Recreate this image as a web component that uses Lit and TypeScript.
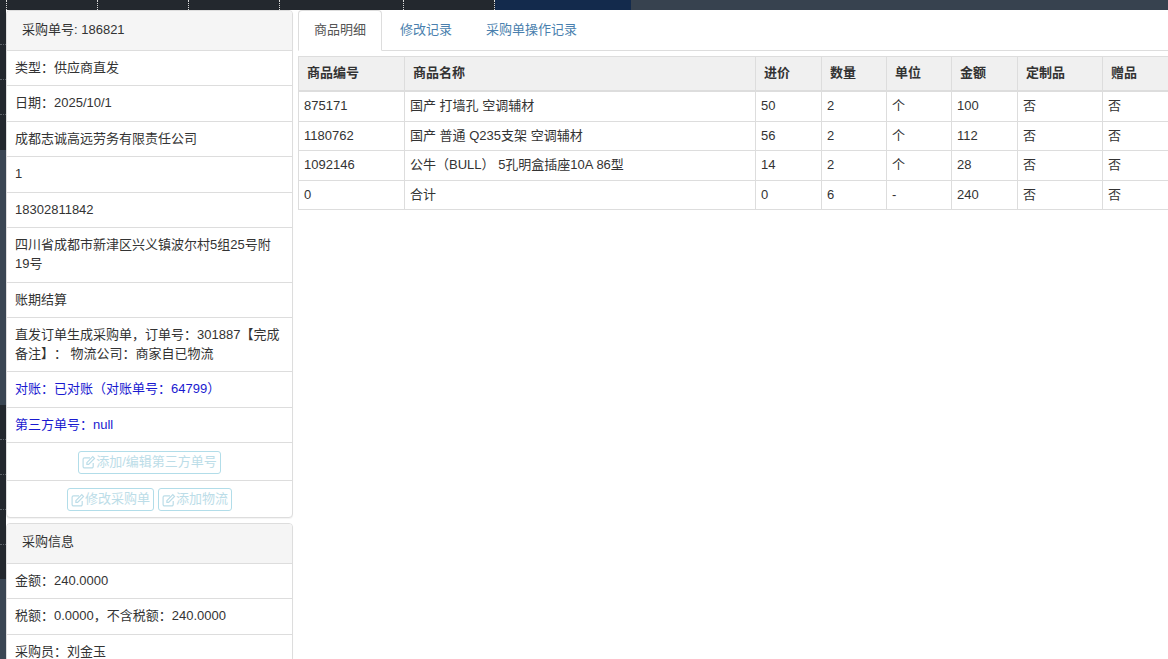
import { LitElement, css, html } from "lit";
import { customElement } from "lit/decorators.js";

// full-width punctuation, kept as escapes
const CN = "\uFF1A";
const CM = "\uFF0C";
const LP = "\uFF08";
const RP = "\uFF09";
const LB = "\u3010";
const RB = "\u3011";

const editIcon = html`<svg class="icon" viewBox="0 0 14 14" width="14" height="14" fill="none" stroke="currentColor" stroke-width="1.2">
  <path d="M11.2 8v3.4a1.5 1.5 0 0 1-1.5 1.5H2.6a1.5 1.5 0 0 1-1.5-1.5V4.3a1.5 1.5 0 0 1 1.5-1.5H8" />
  <path d="M4.9 7.6 10.8 1.7l1.7 1.7-5.9 5.9H4.9z" />
</svg>`;

const orderItems = [
  { text: `类型${CN}供应商直发` },
  { text: `日期${CN}2025/10/1` },
  { text: "成都志诚高远劳务有限责任公司" },
  { text: "1" },
  { text: "18302811842" },
  { text: "四川省成都市新津区兴义镇波尔村5组25号附19号" },
  { text: "账期结算" },
  { text: `直发订单生成采购单${CM}订单号${CN}301887${LB}完成备注${RB}${CN} 物流公司${CN}商家自已物流` },
  { text: `对账${CN}已对账${LP}对账单号${CN}64799${RP}`, blue: true },
  { text: `第三方单号${CN}null`, blue: true },
];
const buyItems = [
  `金额${CN}240.0000`,
  `税额${CN}0.0000${CM}不含税额${CN}240.0000`,
  `采购员${CN}刘金玉`,
];

const columns = [106, 351, 66, 65, 65, 66, 85, 90];
const headers = ["商品编号", "商品名称", "进价", "数量", "单位", "金额", "定制品", "赠品"];
const rows = [
  ["875171", "国产 打墙孔 空调辅材", "50", "2", "个", "100", "否", "否"],
  ["1180762", "国产 普通 Q235支架 空调辅材", "56", "2", "个", "112", "否", "否"],
  ["1092146", `公牛${LP}BULL${RP} 5孔明盒插座10A 86型`, "14", "2", "个", "28", "否", "否"],
  ["0", "合计", "0", "6", "-", "240", "否", "否"],
];

@customElement("app-root")
export class AppRoot extends LitElement {
  static styles = css`
    :host {
      display: block;
      width: 100%;
      height: 100vh;
      overflow: hidden;
      background: #fff;
      color: #333;
      font: 13px/1.42857 "Liberation Sans", "Noto Sans CJK SC", sans-serif;
      text-spacing-trim: space-all;
    }
    * {
      box-sizing: border-box;
    }
    .top {
      display: flex;
      height: 10px;
    }
    .seg {
      flex: none;
      background: #23282e;
      border-right: 1px dotted #d8d8d8;
    }
    .navy {
      flex: none;
      width: 136px;
      background: #132a4c;
    }
    .slate {
      flex: 1;
      background: #37424f;
    }
    .body {
      display: flex;
      height: 649px;
    }
    .rail {
      flex: none;
      width: 6px;
      display: flex;
      flex-direction: column;
    }
    .rail-dark {
      background: #23282e;
    }
    .rail-light {
      background: #3a4653;
    }
    .tick {
      height: 35px;
      border-bottom: 1px dotted #5c6268;
    }
    .side {
      flex: none;
      width: 287px;
      margin-right: 5px;
    }
    .panel {
      background: #fff;
      border: 1px solid #ddd;
      border-radius: 4px;
      margin-bottom: 5px;
      box-shadow: 0 1px 1px rgba(0, 0, 0, 0.05);
      overflow: hidden;
    }
    .heading {
      padding: 10px 15px;
      background: #f5f5f5;
      border-bottom: 1px solid #ddd;
    }
    .heading.second {
      padding: 9.4px 15px 11px;
    }
    .item {
      padding: 8px;
      border-bottom: 1px solid #ddd;
    }
    .item:last-child {
      border-bottom: 0;
    }
    .blue {
      color: #1a1ad0;
    }
    .actions {
      display: flex;
      justify-content: center;
      gap: 4px;
      padding: 7.5px 8px 5.7px;
    }
    .btn {
      display: flex;
      align-items: center;
      height: 23px;
      padding: 0 3px;
      color: #bcdde8;
      background: #fff;
      border: 1px solid #b2dde9;
      border-radius: 3px;
      white-space: nowrap;
    }
    .icon {
      flex: none;
    }
    .main {
      flex: 1;
      min-width: 0;
      overflow: hidden;
    }
    .tabs {
      display: flex;
      height: 41px;
      border-bottom: 1px solid #ddd;
    }
    .tab {
      height: 40px;
      margin-right: 2px;
      padding: 10px 15px;
      border: 1px solid transparent;
      border-radius: 4px 4px 0 0;
      color: #4a7fae;
    }
    .tab.active {
      height: 41px;
      color: #555;
      background: #fff;
      border-color: #ddd #ddd #fff;
    }
    table {
      width: 894px;
      margin-top: 5px;
      table-layout: fixed;
      border-collapse: collapse;
    }
    th,
    td {
      border: 1px solid #ddd;
      text-align: left;
      font-weight: normal;
    }
    th {
      padding: 6.5px 8px 8px;
      font-weight: bold;
      background: #f0f0f0;
      border-bottom-width: 2px;
    }
    td {
      padding: 5px;
      white-space: nowrap;
    }
  `;

  render() {
    return html`
      <div class="top">
        ${[7, 91, 91, 91, 124, 91].map((w) => html`<div class="seg" style="width:${w}px"></div>`)}
        <div class="navy"></div>
        <div class="slate"></div>
      </div>
      <div class="body">
        <div class="rail">
          <div class="rail-dark" style="height:140px">${[0, 1, 2].map(() => html`<div class="tick"></div>`)}</div>
          <div class="rail-light" style="height:255px"></div>
          <div class="rail-dark" style="height:174px">${[0, 1, 2, 3].map(() => html`<div class="tick"></div>`)}</div>
          <div class="rail-light" style="flex:1"></div>
        </div>
        <div class="side">
          <div class="panel">
            <div class="heading">采购单号: 186821</div>
            ${orderItems.map((i) => html`<div class="item ${i.blue ? "blue" : ""}">${i.text}</div>`)}
            <div class="item actions">
              <div class="btn">${editIcon}<span>添加/编辑第三方单号</span></div>
            </div>
            <div class="item actions">
              <div class="btn">${editIcon}<span>修改采购单</span></div>
              <div class="btn">${editIcon}<span>添加物流</span></div>
            </div>
          </div>
          <div class="panel">
            <div class="heading second">采购信息</div>
            ${buyItems.map((t) => html`<div class="item">${t}</div>`)}
          </div>
        </div>
        <div class="main">
          <div class="tabs">
            <div class="tab active">商品明细</div>
            <div class="tab">修改记录</div>
            <div class="tab">采购单操作记录</div>
          </div>
          <table>
            <colgroup>
              ${columns.map((w) => html`<col style="width:${w}px" />`)}
            </colgroup>
            <thead>
              <tr>${headers.map((h) => html`<th>${h}</th>`)}</tr>
            </thead>
            <tbody>
              ${rows.map((r) => html`<tr>${r.map((c) => html`<td>${c}</td>`)}</tr>`)}
            </tbody>
          </table>
        </div>
      </div>
    `;
  }
}
